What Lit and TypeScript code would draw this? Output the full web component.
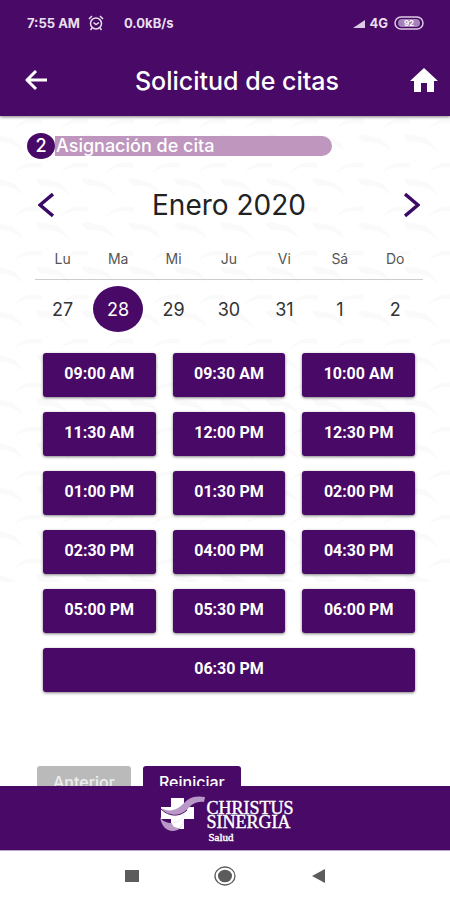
import { LitElement, html, svg, css } from "lit";
import { customElement, state } from "lit/decorators.js";

const DAYS = [
  ["Lu", "27"],
  ["Ma", "28"],
  ["Mi", "29"],
  ["Ju", "30"],
  ["Vi", "31"],
  ["Sá", "1"],
  ["Do", "2"],
];

const TIMES = [
  "09:00 AM", "09:30 AM", "10:00 AM",
  "11:30 AM", "12:00 PM", "12:30 PM",
  "01:00 PM", "01:30 PM", "02:00 PM",
  "02:30 PM", "04:00 PM", "04:30 PM",
  "05:00 PM", "05:30 PM", "06:00 PM",
  "06:30 PM",
];

@customElement("app-root")
export class AppRoot extends LitElement {
  @state() private selected = "28";

  static styles = css`
    :host {
      display: flex;
      flex-direction: column;
      height: 100vh;
      overflow: hidden;
      background: #fff;
      color: #222;
      font-family: Inter, "Liberation Sans", sans-serif;
    }
    * { box-sizing: border-box; }
    button {
      font: inherit;
      color: inherit;
      border: 0;
      padding: 0;
      background: none;
      cursor: pointer;
    }
    svg { display: block; }
    .top {
      flex: none;
      background: #480a66;
      color: #fff;
      box-shadow: 0 1px 3px rgba(0, 0, 0, 0.5);
      z-index: 1;
    }
    .status {
      display: flex;
      align-items: center;
      height: 46px;
      padding: 0 26px;
      font: 700 13px/16px Inter, sans-serif;
      color: #e9dff0;
    }
    .time { margin-left: 1px; }
    .alarm { margin: 0 20px 0 8px; }
    .signal { margin-left: auto; }
    .net { margin: 0 6px 0 4px; }
    .bar {
      display: grid;
      grid-template-columns: 62px 1fr 48px;
      align-items: center;
      height: 70px;
      padding: 0 2px 0 12px;
    }
    .bar button { display: grid; place-items: center; width: 48px; height: 48px; }
    .bar h1 {
      margin: 0;
      text-align: center;
      font-size: 25px;
      line-height: 32px;
      font-weight: 500;
    }
    .main {
      position: relative;
      flex: 1;
      min-height: 0;
      overflow: hidden;
      padding: 17px 27px 0;
    }
    .marks {
      position: absolute;
      inset: 0 0 auto;
      width: 100%;
      height: 466px;
    }
    .content { position: relative; }
    .step { display: flex; align-items: center; }
    .num {
      width: 28px;
      height: 26px;
      border-radius: 50%;
      background: #480a66;
      color: #fff;
      text-align: center;
      font-size: 18px;
      line-height: 26px;
      font-weight: 500;
    }
    .label {
      width: 277px;
      height: 20px;
      padding-left: 1px;
      border-radius: 0 10px 10px 0;
      background: #be96be;
      color: #fff;
      font-size: 18px;
      line-height: 20px;
      font-weight: 500;
    }
    .month {
      display: flex;
      align-items: center;
      justify-content: space-between;
      height: 48px;
      margin: 22px -8px 0 0;
    }
    .month h2 { margin: 0; font-size: 28px; line-height: 32px; font-weight: 400; }
    .month button { width: 38px; height: 48px; display: grid; place-items: center; }
    table {
      width: calc(100% - 8px);
      margin: 14px 0 0 8px;
      border-collapse: collapse;
      table-layout: fixed;
    }
    th {
      height: 36px;
      padding: 0 0 4px;
      border-bottom: 1px solid #ccc;
      color: #555;
      font-size: 14px;
      font-weight: 400;
    }
    td { height: 60px; padding: 0; text-align: center; }
    .day { width: 50px; height: 46px; border-radius: 50%; font-size: 18px; color: #333; }
    .day.on { background: #480a66; color: #fff; }
    .slots {
      display: grid;
      grid-template-columns: repeat(3, 1fr);
      gap: 15px 17px;
      margin: 14px 8px 0 16px;
    }
    .slots button {
      height: 44px;
      padding-bottom: 2px;
      border-radius: 3px;
      background: #480a66;
      color: #fff;
      font: 700 16px/20px Roboto, sans-serif;
      box-shadow: 0 1px 3px rgba(0, 0, 0, 0.5);
    }
    .slots button:last-child { grid-column: 1 / -1; }
    .actions { display: flex; gap: 12px; margin: 74px 0 0 10px; }
    .actions button {
      height: 36px;
      padding: 0 16px 4px;
      border-radius: 3px;
      background: #480a66;
      color: #fff;
      font-size: 16px;
      line-height: 32px;
      font-weight: 500;
    }
    .actions button:disabled { background: #bababa; color: #eee; }
    .foot {
      flex: none;
      display: flex;
      justify-content: center;
      height: 65px;
      padding: 9px 0 0 4px;
      background: #480a66;
      color: #fff;
      border-bottom: 1px solid #b5a8c8;
      z-index: 1;
    }
    .brand {
      padding-top: 6px;
      font: 400 18px/14px "Liberation Serif", serif;
      -webkit-text-stroke: 0.4px #fff;
    }
    .brand span { display: block; }
    .brand .sub { padding: 1px 0 0 2px; font-size: 11px; }
    .nav {
      flex: none;
      display: flex;
      align-items: center;
      justify-content: center;
      gap: 67px;
      height: 49px;
    }
    .nav button { width: 26px; height: 26px; display: grid; place-items: center; }
  `;

  private marks() {
    return svg`<svg class="marks" aria-hidden="true">
      <defs>
        <pattern id="doves" x="14" y="17" width="46" height="44" patternUnits="userSpaceOnUse">
          <g fill="#fafafb">
            <path d="M0 40C6 31 16 28 28 30L27 35C17 33 8 34 0 40Z"/>
            <path d="M22 2C30 0 35 4 43 5C49 8 53 13 56 19C47 11 38 8 30 9C26 9 23 6 22 2Z"/>
            <path d="M-24 2C-16 0 -11 4 -3 5C3 8 7 13 10 19C1 11 -8 8 -16 9C-20 9 -23 6 -24 2Z"/>
          </g>
        </pattern>
      </defs>
      <rect width="100%" height="100%" fill="url(#doves)"/>
    </svg>`;
  }

  render() {
    return html`
      <header class="top">
        <div class="status">
          <span class="time">7:55 AM</span>
          <svg class="alarm" width="16" height="16" viewBox="0 0 16 16" fill="none" stroke="currentColor" stroke-width="1.5">
            <circle cx="8" cy="8.5" r="5.5"/><path d="M1 4l3-3M15 4l-3-3M5.5 7.5L8 9.5l3-2M4 13l-1.500 2M12 13l1.500 2"/>
          </svg>
          <span>0.0kB/s</span>
          <svg class="signal" width="12" height="9" viewBox="0 0 12 9"><path d="M0 9L12 1V9Z" fill="#dccbe4"/></svg>
          <span class="net">4G</span>
          <svg width="30" height="14" viewBox="0 0 30 14">
            <rect x="1" y="1" width="28" height="12" rx="6" fill="none" stroke="#dccbe4" stroke-width="1.5"/>
            <rect x="4" y="3" width="22" height="8" rx="4" fill="#a583b8"/>
            <text x="15" y="10" text-anchor="middle" font-size="8" font-weight="700" fill="#fff">92</text>
          </svg>
        </div>
        <div class="bar">
          <button aria-label="Volver">
            <svg width="24" height="22" viewBox="0 0 24 22" fill="none" stroke="#fff" stroke-width="3" stroke-linejoin="round"><path d="M23 10H3M12 1L3 10l9 9"/></svg>
          </button>
          <h1>Solicitud de citas</h1>
          <button aria-label="Inicio">
            <svg width="28" height="26" viewBox="0 0 28 26"><path d="M14 0L28 13H24V24H17V15H11V24H4V13H0Z" fill="#fff"/></svg>
          </button>
        </div>
      </header>
      <main class="main">
        ${this.marks()}
        <div class="content">
          <div class="step"><span class="num">2</span><span class="label">Asignación de cita</span></div>
          <div class="month">
            <button aria-label="Mes anterior">
              <svg width="16" height="26" viewBox="0 0 16 26" fill="none" stroke="#3a0a66" stroke-width="3.5"><path d="M15 2L2 13l13 11"/></svg>
            </button>
            <h2>Enero 2020</h2>
            <button aria-label="Mes siguiente">
              <svg width="16" height="26" viewBox="0 0 16 26" fill="none" stroke="#3a0a66" stroke-width="3.5"><path d="M1 2l13 11L1 24"/></svg>
            </button>
          </div>
          <table>
            <thead><tr>${DAYS.map(([name]) => html`<th scope="col">${name}</th>`)}</tr></thead>
            <tbody><tr>${DAYS.map(([, d]) => html`<td>
              <button class="day ${d === this.selected ? "on" : ""}" @click=${() => (this.selected = d)}>${d}</button>
            </td>`)}</tr></tbody>
          </table>
          <div class="slots">${TIMES.map((t) => html`<button>${t}</button>`)}</div>
          <div class="actions"><button disabled>Anterior</button><button>Reiniciar</button></div>
        </div>
      </main>
      <footer class="foot">
        <svg width="46" height="38" viewBox="0 0 46 38">
          <path d="M11 3H24V12H34V24H24V34H11V24H1V12H11Z" fill="#fff"/>
          <path d="M1 13C8 17 16 16 22 10C28 3 34 0 45 2L44 7C35 6 31 10 27 15C20 22 8 21 1 13Z" fill="#b998c8"/>
          <path d="M1 14C9 22 20 22 27 15" fill="none" stroke="#480a66" stroke-width="1"/>
          <path d="M0 22C2 26 7 28 12 28C18 28 22 25 24 19C25 27 22 36 13 36C5 36 1 29 0 22Z" fill="#b998c8"/>
          <path d="M12 28C18 28 22 25 24 19C25 25 23 30 20 33C15 33 12 31 12 28Z" fill="#fff"/>
        </svg>
        <div class="brand"><span>CHRISTUS</span><span>SINERGIA</span><span class="sub">Salud</span></div>
      </footer>
      <nav class="nav" aria-label="Sistema">
        <button aria-label="Recientes"><svg width="14" height="12"><rect width="14" height="12" fill="#5c5c5c"/></svg></button>
        <button aria-label="Pantalla principal"><svg width="22" height="20" viewBox="0 0 22 20"><ellipse cx="11" cy="10" rx="10" ry="9" fill="none" stroke="#5c5c5c" stroke-width="1.3"/><ellipse cx="11" cy="10" rx="7" ry="6.3" fill="#5c5c5c"/></svg></button>
        <button aria-label="Atrás"><svg width="13" height="14" viewBox="0 0 13 14"><path d="M13 0V14L0 7Z" fill="#5c5c5c"/></svg></button>
      </nav>
    `;
  }
}
